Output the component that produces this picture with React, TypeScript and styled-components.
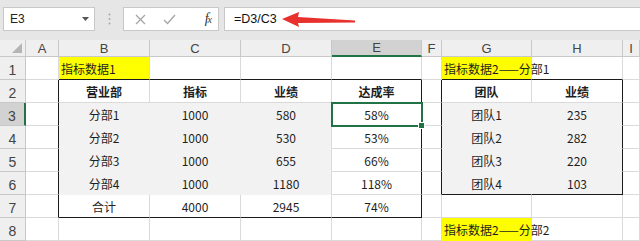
import React from 'react';
import styled, { createGlobalStyle, css } from 'styled-components';

const GlobalStyle = createGlobalStyle`
  html, body {
    margin: 0;
    padding: 0;
    background: #fff;
  }
  body {
    font-family: 'Noto Sans CJK SC', 'Noto Sans', sans-serif;
  }
`;

const GRID = '#dadada';
const HEAD_LINE = '#c8c8c8';
const DARK = '#1a1a1a';
const GREEN = '#217346';
const YELLOW = '#ffff00';
const SHADE = '#f2f2f2';

const COLS = ['A', 'B', 'C', 'D', 'E', 'F', 'G', 'H', 'I'];
const COL_WIDTHS = [33, 91, 91, 91, 90, 20, 90, 91, 17];
const ROW_COUNT = 8;
const ACTIVE_COL = 4; // E
const ACTIVE_ROW = 3;

type CellSpec = {
  text?: string;
  fill?: string;
  bold?: boolean;
  left?: boolean;
  spill?: boolean;
};

// B2:E7 and G2:H6 carry a thin dark outline
const TABLES = [
  { c1: 1, c2: 4, r1: 2, r2: 7 },
  { c1: 6, c2: 7, r1: 2, r2: 6 },
];

const CELLS: { [key: string]: CellSpec } = {
  B1: { text: '指标数据1', fill: YELLOW, left: true },
  G1: { text: '指标数据2——分部1', fill: YELLOW, left: true, spill: true },
  B2: { text: '营业部', bold: true },
  C2: { text: '指标', bold: true },
  D2: { text: '业绩', bold: true },
  E2: { text: '达成率', bold: true },
  G2: { text: '团队', bold: true },
  H2: { text: '业绩', bold: true },
  B3: { text: '分部1', fill: SHADE },
  C3: { text: '1000', fill: SHADE },
  D3: { text: '580', fill: SHADE },
  E3: { text: '58%' },
  G3: { text: '团队1', fill: SHADE },
  H3: { text: '235', fill: SHADE },
  B4: { text: '分部2', fill: SHADE },
  C4: { text: '1000', fill: SHADE },
  D4: { text: '530', fill: SHADE },
  E4: { text: '53%' },
  G4: { text: '团队2', fill: SHADE },
  H4: { text: '282', fill: SHADE },
  B5: { text: '分部3', fill: SHADE },
  C5: { text: '1000', fill: SHADE },
  D5: { text: '655', fill: SHADE },
  E5: { text: '66%' },
  G5: { text: '团队3', fill: SHADE },
  H5: { text: '220', fill: SHADE },
  B6: { text: '分部4', fill: SHADE },
  C6: { text: '1000', fill: SHADE },
  D6: { text: '1180', fill: SHADE },
  E6: { text: '118%' },
  G6: { text: '团队4', fill: SHADE },
  H6: { text: '103', fill: SHADE },
  B7: { text: '合计' },
  C7: { text: '4000' },
  D7: { text: '2945' },
  E7: { text: '74%' },
  G8: { text: '指标数据2——分部2', fill: YELLOW, left: true, spill: true },
};

const darkRight = (ci: number, r: number) =>
  TABLES.some((t) => r >= t.r1 && r <= t.r2 && (ci === t.c2 || ci + 1 === t.c1));

const darkBottom = (ci: number, r: number) =>
  TABLES.some((t) => ci >= t.c1 && ci <= t.c2 && (r === t.r2 || r + 1 === t.r1));

const Page = styled.div`
  width: 640px;
  height: 241px;
  overflow: hidden;
  background: #fff;
`;

/* ---------- formula bar ---------- */

const FormulaBar = styled.div`
  position: relative;
  display: flex;
  align-items: flex-start;
  height: 40px;
  box-sizing: border-box;
  padding: 7px 0 0 3px;
  background: #e6e6e6;
`;

const NameBox = styled.div`
  width: 92px;
  height: 24px;
  box-sizing: border-box;
  display: flex;
  align-items: center;
  justify-content: space-between;
  padding: 0 5px 0 6px;
  background: #fff;
  border: 1px solid ${HEAD_LINE};
  font: 12px 'Liberation Sans', Arial, sans-serif;
  color: #222;
`;

const Grip = styled.div`
  width: 28px;
  height: 24px;
  display: flex;
  align-items: center;
  justify-content: center;
`;

const ButtonBox = styled.div`
  width: 96px;
  height: 24px;
  box-sizing: border-box;
  display: flex;
  align-items: center;
  background: #fff;
  border: 1px solid ${HEAD_LINE};
`;

const IconSlot = styled.div<{ $w: number; $end?: boolean }>`
  width: ${({ $w }) => $w}px;
  height: 100%;
  display: flex;
  align-items: center;
  justify-content: ${({ $end }) => ($end ? 'flex-end' : 'center')};
  padding-right: ${({ $end }) => ($end ? '7px' : '0')};
  box-sizing: border-box;
`;

const Fx = styled.span`
  font: italic 14px 'Liberation Serif', 'Times New Roman', serif;
  color: #333;
  letter-spacing: -1px;

  small {
    font-size: 10px;
  }
`;

const FormulaInput = styled.div`
  flex: 1;
  height: 24px;
  margin-left: 5px;
  box-sizing: border-box;
  display: flex;
  align-items: center;
  padding-left: 9px;
  background: #fff;
  border: 1px solid ${HEAD_LINE};
  border-right: none;
  font: 12.5px 'Liberation Sans', Arial, sans-serif;
  color: #111;
`;

const Arrow = styled.svg`
  position: absolute;
  left: 278px;
  top: 8px;
`;

/* ---------- sheet ---------- */

const Sheet = styled.div`
  display: grid;
  grid-template-columns: 26px ${COL_WIDTHS.map((w) => `${w}px`).join(' ')};
  grid-template-rows: 17px repeat(${ROW_COUNT}, 23px);
`;

const Corner = styled.div`
  box-sizing: border-box;
  display: flex;
  align-items: flex-end;
  justify-content: flex-end;
  padding: 0 3px 3px 0;
  background: #efefef;
  border-right: 1px solid ${HEAD_LINE};
  border-bottom: 1px solid ${HEAD_LINE};
`;

const ColHead = styled.div<{ $active?: boolean }>`
  box-sizing: border-box;
  display: flex;
  align-items: center;
  justify-content: center;
  background: ${({ $active }) => ($active ? '#d2d2d2' : '#efefef')};
  border-right: 1px solid ${HEAD_LINE};
  border-bottom: ${({ $active }) => ($active ? `2px solid ${GREEN}` : `1px solid ${HEAD_LINE}`)};
  font: 13px 'Liberation Sans', Arial, sans-serif;
  color: #444;
  overflow: hidden;
`;

const RowHead = styled.div<{ $active?: boolean }>`
  box-sizing: border-box;
  display: flex;
  align-items: center;
  justify-content: center;
  padding-top: 3px;
  background: ${({ $active }) => ($active ? '#d2d2d2' : '#efefef')};
  border-right: ${({ $active }) => ($active ? `2px solid ${GREEN}` : `1px solid ${HEAD_LINE}`)};
  border-bottom: 1px solid ${HEAD_LINE};
  font: 14px 'Liberation Sans', Arial, sans-serif;
  color: #444;
`;

const Cell = styled.div<{
  $fill?: string;
  $bold?: boolean;
  $left?: boolean;
  $spill?: boolean;
  $right: string;
  $bottom: string;
  $selected?: boolean;
}>`
  position: relative;
  box-sizing: border-box;
  display: flex;
  align-items: center;
  justify-content: ${({ $left }) => ($left ? 'flex-start' : 'center')};
  padding: 0 2px;
  background: ${({ $fill }) => $fill ?? '#fff'};
  border-right: 1px solid ${({ $right }) => $right};
  border-bottom: 1px solid ${({ $bottom }) => $bottom};
  font-size: 12px;
  font-weight: ${({ $bold }) => ($bold ? 700 : 400)};
  color: #1e1e1e;
  white-space: nowrap;
  overflow: ${({ $spill }) => ($spill ? 'visible' : 'hidden')};
  z-index: ${({ $spill }) => ($spill ? 1 : 0)};

  ${({ $selected }) =>
    $selected &&
    css`
      overflow: visible;
      z-index: 2;
      outline: 2px solid ${GREEN};
      outline-offset: -1px;

      &::after {
        content: '';
        position: absolute;
        right: -4px;
        bottom: -4px;
        width: 5px;
        height: 5px;
        background: ${GREEN};
        border: 1px solid #fff;
      }
    `}
`;

function SheetCell({ ci, r }: { ci: number; r: number }) {
  const key = `${COLS[ci]}${r}`;
  const spec = CELLS[key] ?? {};
  const plain = spec.fill ?? GRID;
  const right = darkRight(ci, r) ? DARK : spec.fill && !CELLS[`${COLS[ci + 1]}${r}`]?.fill ? GRID : plain;
  const bottom = darkBottom(ci, r) ? DARK : plain;
  return (
    <Cell
      $fill={spec.fill}
      $bold={spec.bold}
      $left={spec.left}
      $spill={spec.spill}
      $right={right}
      $bottom={bottom}
      $selected={ci === ACTIVE_COL && r === ACTIVE_ROW}
    >
      {spec.text}
    </Cell>
  );
}

export default function App() {
  const rows = Array.from({ length: ROW_COUNT }, (_, i) => i + 1);
  return (
    <Page>
      <GlobalStyle />
      <FormulaBar>
        <NameBox>
          <span>E3</span>
          <svg width="7" height="4" viewBox="0 0 7 4">
            <path d="M0 0 H7 L3.5 4 Z" fill="#555" />
          </svg>
        </NameBox>
        <Grip>
          <svg width="3" height="12" viewBox="0 0 3 12">
            <circle cx="1.5" cy="1.5" r="1" fill="#a8a8a8" />
            <circle cx="1.5" cy="6" r="1" fill="#a8a8a8" />
            <circle cx="1.5" cy="10.5" r="1" fill="#a8a8a8" />
          </svg>
        </Grip>
        <ButtonBox>
          <IconSlot $w={32}>
            <svg width="11" height="11" viewBox="0 0 11 11">
              <path d="M1 1 L10 10 M10 1 L1 10" stroke="#a6a6a6" strokeWidth="1.3" fill="none" />
            </svg>
          </IconSlot>
          <IconSlot $w={26}>
            <svg width="13" height="11" viewBox="0 0 13 11">
              <path d="M1 6 L4.5 9.5 L12 1" stroke="#a6a6a6" strokeWidth="1.4" fill="none" />
            </svg>
          </IconSlot>
          <IconSlot $w={36} $end>
            <Fx>
              f<small>x</small>
            </Fx>
          </IconSlot>
        </ButtonBox>
        <FormulaInput>=D3/C3</FormulaInput>
        <Arrow width="80" height="22" viewBox="0 0 80 22">
          <path d="M4 11 L21 4 L20 9 L77 12.5 L77 14.5 L20 15 L21 19 Z" fill="#e8312c" />
        </Arrow>
      </FormulaBar>

      <Sheet>
        <Corner>
          <svg width="10" height="10" viewBox="0 0 10 10">
            <path d="M10 0 L10 10 L0 10 Z" fill="#b5b5b5" />
          </svg>
        </Corner>
        {COLS.map((c, ci) => (
          <ColHead key={c} $active={ci === ACTIVE_COL}>
            {c}
          </ColHead>
        ))}
        {rows.map((r) => (
          <React.Fragment key={r}>
            <RowHead $active={r === ACTIVE_ROW}>{r}</RowHead>
            {COLS.map((c, ci) => (
              <SheetCell key={c} ci={ci} r={r} />
            ))}
          </React.Fragment>
        ))}
      </Sheet>
    </Page>
  );
}
